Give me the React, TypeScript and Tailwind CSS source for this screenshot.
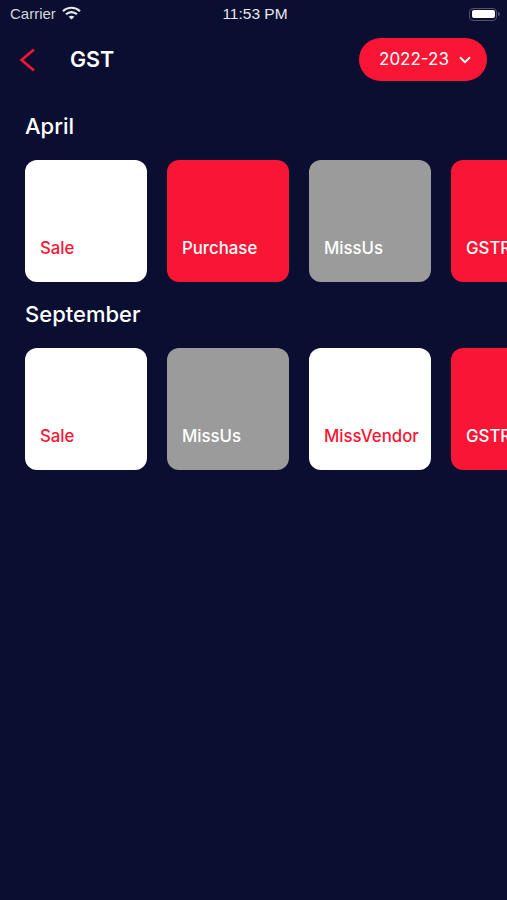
import { ChevronDown } from "lucide-react";

type Tile = { label: string; tone: "white" | "red" | "gray" };

const months: { name: string; tiles: Tile[] }[] = [
  {
    name: "April",
    tiles: [
      { label: "Sale", tone: "white" },
      { label: "Purchase", tone: "red" },
      { label: "MissUs", tone: "gray" },
      { label: "GSTR", tone: "red" },
    ],
  },
  {
    name: "September",
    tiles: [
      { label: "Sale", tone: "white" },
      { label: "MissUs", tone: "gray" },
      { label: "MissVendor", tone: "white" },
      { label: "GSTR", tone: "red" },
    ],
  },
];

const toneClass = {
  white: "bg-white text-[#f91534]",
  red: "bg-[#f91534] text-white",
  gray: "bg-[#9b9b9b] text-white",
};

const App = () => {
  return (
    <div className="h-[900px] w-[507px] overflow-hidden bg-[#0a0e30] font-['Inter',sans-serif] text-white">
      <div className="flex h-[28px] items-center justify-between pl-[10px] pr-[7px] font-['Liberation_Sans',sans-serif] text-[15px]">
        <div className="flex w-[120px] items-center gap-[6px] text-[#d5d6dc]">
          <span>Carrier</span>
          <svg width="19" height="14" viewBox="0 0 19 14" className="mb-[2px]" fill="none">
            <path d="M1 5.2C5.8.6 13.2.6 18 5.2" stroke="#e8e8ec" strokeWidth="2.2" />
            <path d="M4 8.3c3.2-3 7.8-3 11 0" stroke="#e8e8ec" strokeWidth="2.2" />
            <path d="M9.5 13.6 6.6 10.7c1.7-1.4 4.1-1.4 5.8 0z" fill="#e8e8ec" />
          </svg>
        </div>
        <span className="text-[15.5px] text-[#e8e8ec]">11:53 PM</span>
        <div className="flex w-[120px] items-center justify-end">
          <div className="flex h-[13px] w-[28px] items-center rounded-[4px] border-[1.5px] border-[#50536a] p-[1.5px]">
            <div className="h-full w-full rounded-[2px] bg-white" />
          </div>
          <div className="ml-[1px] h-[4px] w-[1.5px] rounded-r-sm bg-[#50536a]" />
        </div>
      </div>

      <div className="mt-[10px] flex h-[43px] items-center justify-between pl-[13px] pr-[20px]">
        <div className="flex items-center">
          <svg width="30" height="30" viewBox="0 0 30 30" fill="none">
            <path d="M21 4.5 8.5 15 21 25.5" stroke="#f91534" strokeWidth="2.6" />
          </svg>
          <span className="ml-[27px] text-[21.5px] font-semibold">GST</span>
        </div>
        <div className="flex h-[43px] w-[128px] items-center justify-center gap-[7px] rounded-full bg-[#f91534] pl-[7px]">
          <span className="text-[17px]">2022-23</span>
          <ChevronDown size={18} strokeWidth={2.4} />
        </div>
      </div>

      <div className="mt-[30px] pl-[25px]">
        {months.map((month) => (
          <div key={month.name} className="mb-[17px]">
            <h2 className="mb-[17px] h-[32px] text-[22px] font-medium leading-[30px]">{month.name}</h2>
            <div className="flex gap-[20px] overflow-hidden">
              {month.tiles.map((tile, i) => (
                <div
                  key={i}
                  className={`flex h-[122px] w-[122px] shrink-0 items-end rounded-[12px] pb-[23px] pl-[15px] text-[16.8px] font-medium leading-[22px] ${toneClass[tile.tone]}`}
                >
                  {tile.label}
                </div>
              ))}
            </div>
          </div>
        ))}
      </div>
    </div>
  );
};

export default App;
